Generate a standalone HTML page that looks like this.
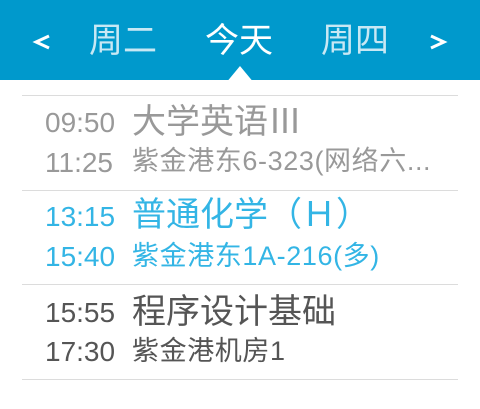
<!DOCTYPE html>
<html><head><meta charset="utf-8"><style>
body{margin:0;width:480px;height:409px;background:#fff;position:relative;overflow:hidden;font-family:"Liberation Sans","Noto Sans CJK SC",sans-serif}
.hdr{position:absolute;left:0;top:0;width:480px;height:80px;background:#0099cc}
.t{position:absolute;white-space:nowrap;line-height:1}
.h{color:#c8e8f4;font-size:34px;top:24px}
.line{position:absolute;left:22px;width:436px;height:1px;background:#dcdcdc}
.tm{font-size:28px;left:45px}
.ti{font-size:34px;left:132px}
.sb{font-size:27px;left:132px;letter-spacing:0.6px}
</style></head><body>
<div class="hdr"></div>
<svg style="position:absolute;left:0;top:0" width="480" height="81"><polygon points="228,80.5 240,66 252,80.5" fill="#fff"/></svg>
<svg style="position:absolute;left:0;top:0" width="480" height="80" fill="none" stroke="#fff" stroke-width="3"><polyline points="49,36 36,42 49,48"/><polyline points="431,36 444,42 431,48"/></svg>
<div class="t h" style="left:89px">周二</div>
<div class="t h" style="left:205px;color:#fff">今天</div>
<div class="t h" style="left:321px">周四</div>

<div class="line" style="top:95px"></div>
<div class="t tm" style="top:109px;color:#999">09:50</div>
<div class="t ti" style="top:105px;color:#999">大学英语Ⅲ</div>
<div class="t tm" style="top:149px;color:#999">11:25</div>
<div class="t sb" style="top:148px;color:#999">紫金港东6-323(网络六...</div>

<div class="line" style="top:190px"></div>
<div class="t tm" style="top:203px;color:#33b5e5">13:15</div>
<div class="t ti" style="top:198px;color:#33b5e5">普通化学（Ｈ）</div>
<div class="t tm" style="top:243px;color:#33b5e5">15:40</div>
<div class="t sb" style="top:243px;color:#33b5e5">紫金港东1A-216(多)</div>

<div class="line" style="top:284px"></div>
<div class="t tm" style="top:299px;color:#555">15:55</div>
<div class="t ti" style="top:295px;color:#555">程序设计基础</div>
<div class="t tm" style="top:338px;color:#555">17:30</div>
<div class="t sb" style="top:338px;color:#555">紫金港机房1</div>

<div class="line" style="top:379px"></div>
</body></html>
